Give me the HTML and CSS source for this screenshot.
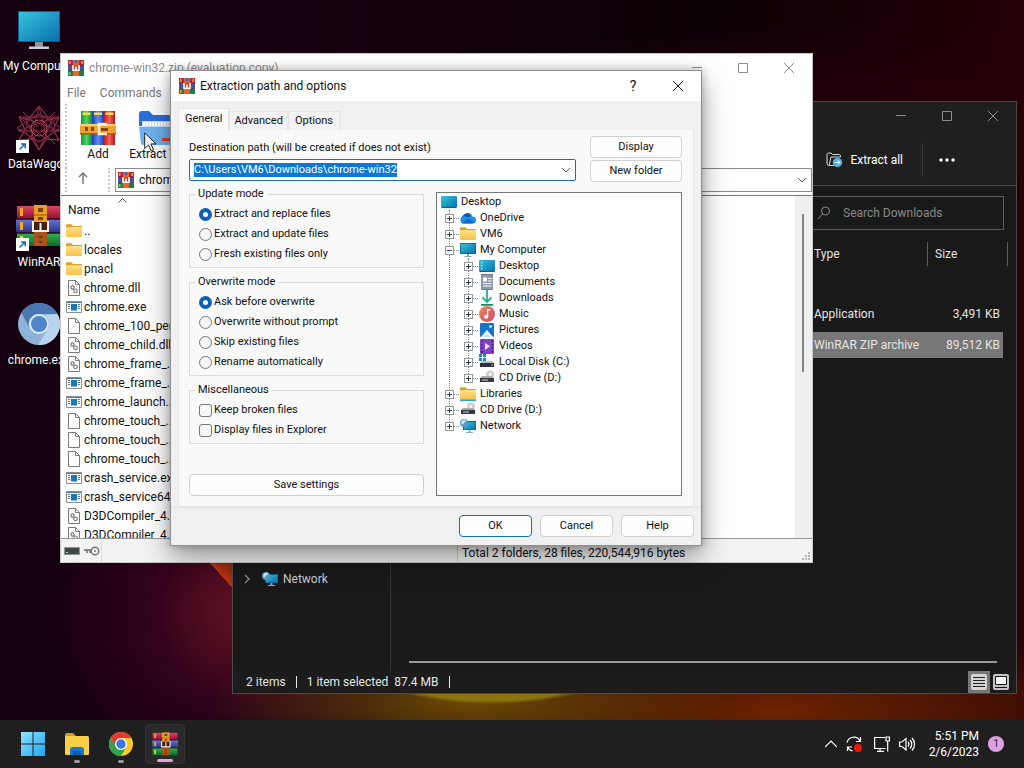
FILE: index.html
```html
<!DOCTYPE html>
<html lang="en">
<head>
  <meta charset="UTF-8" />
  <meta name="viewport" content="width=device-width, initial-scale=1" />
  <title>Extraction path and options</title>
  <link rel="stylesheet" href="styles.css">
</head>
<body>
  <!-- shared icons -->
  <svg class="sprite" width="0" height="0" aria-hidden="true">
    <defs>
      <linearGradient id="gScreen" x1="0" y1="0" x2="1" y2="1">
        <stop offset="0" stop-color="#36c4dc" /><stop offset="1" stop-color="#0b6fae" />
      </linearGradient>
      <linearGradient id="gFolder" x1="0" y1="0" x2="0" y2="1">
        <stop offset="0" stop-color="#ffe08a" /><stop offset="1" stop-color="#f7c244" />
      </linearGradient>
      <linearGradient id="gRed" x1="0" y1="0" x2="0" y2="1">
        <stop offset="0" stop-color="#e0466a" /><stop offset="1" stop-color="#8c0f2c" />
      </linearGradient>
      <linearGradient id="gBlue" x1="0" y1="0" x2="0" y2="1">
        <stop offset="0" stop-color="#6a76d8" /><stop offset="1" stop-color="#27307e" />
      </linearGradient>
      <linearGradient id="gGreen" x1="0" y1="0" x2="0" y2="1">
        <stop offset="0" stop-color="#35b050" /><stop offset="1" stop-color="#0c6a2a" />
      </linearGradient>
      <linearGradient id="gBookG"><stop offset="0" stop-color="#129a3a" /><stop offset=".5" stop-color="#4fd06a" /><stop offset="1" stop-color="#0f8a34" /></linearGradient>
      <linearGradient id="gBookB"><stop offset="0" stop-color="#1c3fb8" /><stop offset=".5" stop-color="#5f8cf5" /><stop offset="1" stop-color="#1c3fb8" /></linearGradient>
      <linearGradient id="gBookR"><stop offset="0" stop-color="#c21a20" /><stop offset=".5" stop-color="#f5605a" /><stop offset="1" stop-color="#b0141c" /></linearGradient>
      <linearGradient id="gMusic" x1="0" y1="0" x2="1" y2="1"><stop offset="0" stop-color="#ee8a5c" /><stop offset="1" stop-color="#c9486a" /></linearGradient>
      <linearGradient id="gWin" x1="0" y1="0" x2="1" y2="1"><stop offset="0" stop-color="#8fe4ff" /><stop offset="1" stop-color="#1fa4f0" /></linearGradient>
    </defs>

    <symbol id="i-rar" viewBox="0 0 16 16">
      <path fill="#b8283c" d="M0 0h16v5H0z" /><path fill="#4456a8" d="M0 5h16v5.500H0z" /><path fill="#1c8048" d="M0 10.500h16V16H0z" />
      <path fill="#4a2a4a" d="M0 4.800h16v.8H0zM0 10.200h16v.8H0z" />
      <path fill="#e8642c" d="M5 0h6v16H5z" /><path fill="#3c6ab8" d="M6.500 0h3v3h-3z" />
      <path fill="#b84a20" d="M4 5h8v6H4z" />
      <path fill="none" stroke="#fff" stroke-width="1.500" d="M5 5v5.200h6V5M8 6.500v3" />
      <path fill="#e8a040" d="M1 1h1.500v3H1zM13.500 1H15v3h-1.500zM1 12h1.500v3H1z" />
    </symbol>

    <symbol id="i-rarbig" viewBox="0 0 46 42">
      <path fill="url(#gRed)" d="M1 1h44v13H1z" /><path fill="url(#gBlue)" d="M0 14h46v14H0z" /><path fill="url(#gGreen)" d="M1 28h44v13H1z" />
      <path fill="#2a0a18" d="M0 13h46v2H0zM0 27h46v2H0z" opacity=".75" />
      <path fill="#f5a623" d="M4 3h3v8H4zM4 17h3v8H4z" /><path fill="#e8d23a" d="M4 31h3v8H4z" />
      <path fill="#a8541c" d="M18 26h13v15H18z" /><path fill="#e9a02a" d="M18 0h13v20H18z" /><path fill="#c77516" d="M18 9h13v2H18z" />
      <path fill="#7a4410" d="M22 3h5v4h-5zM22 12h5v3h-5z" />
      <path fill="#4b1d10" d="M17 17h15v10H17z" />
      <path fill="none" stroke="#f4f1ee" stroke-width="2" d="M17 16v10h15V16M24.500 18v8" />
      <path fill="#6e3410" d="M23 31h3v2h-3zM23 36h3v2h-3z" />
    </symbol>

    <symbol id="i-screen" viewBox="0 0 42 40">
      <path fill="#8a949c" d="M17 32h8v5h-8z" /><path fill="#c9cfd4" d="M11 36.500h20V39H11z" />
      <path fill="#0a5f94" d="M0 1h42v31H0z" /><path fill="url(#gScreen)" d="M1 2h40v29H1z" />
    </symbol>

    <symbol id="i-pc" viewBox="0 0 16 16">
      <path fill="#0b5c8e" d="M0 1h16v11H0z" /><path fill="url(#gScreen)" d="M.7 1.700h14.600v9.600H.7z" />
      <path fill="#8fa9b8" d="M7 12h2v2H7zM4.500 14h7v1h-7z" />
    </symbol>
    <symbol id="i-top" viewBox="0 0 16 16">
      <rect y="2" width="16" height="12" rx="1" fill="url(#gScreen)" /><path fill="#0a5f94" d="M1 13h14v1H1z" />
    </symbol>
    <symbol id="i-desk" viewBox="0 0 16 16">
      <use href="#i-top" /><path fill="#d9fbff" d="M2 4h1.300v1.300H2zM2 7h1.300v1.300H2zM2 10h1.300v1.300H2z" />
    </symbol>
    <symbol id="i-cloud" viewBox="0 0 16 16">
      <path fill="#0a5cb4" d="M4 12a4 4 0 0 1-.6-7A5 5 0 0 1 12 6l-6 6z" />
      <path fill="#1e90e8" d="M4 13.500a3.600 3.600 0 0 1 0-7.200c1.600 0 2.400.7 3.200 1.300l5-1.100A3.500 3.500 0 0 1 12.800 13.500z" />
      <path fill="#1268c8" d="M2 12.500l6-4 6 4c-.5.700-1 1-1.800 1H4c-1 0-1.600-.4-2-1z" />
    </symbol>
    <symbol id="i-folder" viewBox="0 0 16 16">
      <path fill="#dfa022" d="M0 2.500c0-.8.400-1.200 1-1.200h4.500L7 3h8c.6 0 1 .4 1 1v2H0z" />
      <rect y="4" width="16" height="10" rx="1" fill="url(#gFolder)" />
    </symbol>
    <symbol id="i-lib" viewBox="0 0 16 16">
      <use href="#i-folder" /><path fill="#2aa0cc" d="M0 13.500h16V15H0z" />
    </symbol>
    <symbol id="i-docs" viewBox="0 0 16 16">
      <path fill="#8b9aaa" d="M2 0h12v16H2z" /><path fill="#6d7d8e" d="M2 0h12v1H2zM2 15h12v1H2z" />
      <path fill="#fff" d="M4 3.500h4v4H4zM9 4h3.500v1H9zM9 6.500h3.500v1H9zM4 9h8.500v1H4zM4 11.500h8.500v1H4z" />
    </symbol>
    <symbol id="i-down" viewBox="0 0 16 16">
      <path fill="none" stroke="#1fae8a" stroke-width="1.800" d="M8 0v12M3.500 7.500L8 12l4.500-4.500" /><path fill="#129070" d="M2 14h12v1.800H2z" />
    </symbol>
    <symbol id="i-music" viewBox="0 0 16 16">
      <circle cx="8" cy="8" r="8" fill="url(#gMusic)" />
      <path fill="#fff" d="M8 3h3.500v1.500H9.200v6.300A2 2 0 1 1 8 9z" />
    </symbol>
    <symbol id="i-pics" viewBox="0 0 16 16">
      <rect x="1" y="1" width="14" height="14" rx="1" fill="#1277c8" /><path fill="#fff" d="M2 15l5.800-7L14 15z" /><path fill="#b6e0ff" d="M5 15l3-3.500L11 15z" /><circle cx="11.500" cy="4.500" r="1.300" fill="#fff" />
    </symbol>
    <symbol id="i-video" viewBox="0 0 16 16">
      <rect x="1" y="1" width="14" height="15" rx="1" fill="#8040c8" />
      <path fill="#3d1480" d="M2 2.500h1.500V4H2zM2 6h1.500v1.500H2zM2 9.500h1.500V11H2zM2 13h1.500v1.500H2zM12.500 2.500H14V4h-1.500zM12.500 6H14v1.500h-1.500zM12.500 9.500H14V11h-1.500zM12.500 13H14v1.500h-1.500z" />
      <path fill="#f6dcff" d="M6 5l5 3.300L6 12z" />
    </symbol>
    <symbol id="i-disk" viewBox="0 0 16 16">
      <path fill="#1a84d8" d="M0 0h3v3H0zM4 0h3v3H4zM0 4h3v3H0zM4 4h3v3H4z" />
      <path fill="#b9bcc0" d="M3 7h10l2 2H1z" /><path fill="#2f3236" d="M1 9h14v4H1z" /><path fill="#9be070" d="M12 10.500h2v1h-2z" />
    </symbol>
    <symbol id="i-cd" viewBox="0 0 16 16">
      <circle cx="11" cy="4.500" r="4" fill="#ccd0d4" /><circle cx="11" cy="4.500" r="1.200" fill="#fff" />
      <path fill="#a8acb0" d="M3 6h10l2 2H1z" /><path fill="#34373b" d="M1 8h14v4H1z" /><path fill="#d0d4d8" d="M3 9.500h6v1H3z" />
    </symbol>
    <symbol id="i-net" viewBox="0 0 16 16">
      <path fill="#0b5c8e" d="M3 3h13v9H3z" /><path fill="url(#gScreen)" d="M4 4h11.500v7.500H4z" />
      <path fill="#8fa9b8" d="M8.500 12h2v2h-2zM6 14h7v1H6z" />
      <circle cx="4" cy="5" r="4" fill="#5a9cc4" /><path fill="#c8ecf8" d="M2 2.500l3-1 1 2-2 1-1 2-2-1z" />
    </symbol>
    <symbol id="i-file" viewBox="0 0 16 16">
      <path fill="#fff" stroke="#7a7a7a" d="M2.500.5h7l4 4v11h-11z" /><path fill="none" stroke="#7a7a7a" d="M9.500.5v4h4" />
    </symbol>
    <symbol id="i-dll" viewBox="0 0 16 16">
      <use href="#i-file" />
      <circle cx="6.500" cy="7.500" r="1.600" fill="none" stroke="#777" stroke-width="1.200" /><circle cx="9.500" cy="10.800" r="1.800" fill="none" stroke="#777" stroke-width="1.200" />
    </symbol>
    <symbol id="i-exe" viewBox="0 0 16 16">
      <path fill="#fff" stroke="#8a8f96" d="M.5 2.500h15v11H.5z" /><path fill="#1878b8" d="M5 5h6v6.500H5z" />
      <path fill="#5a7898" d="M2 5h2v1H2zM2 7h2v1H2zM2 9h2v1H2zM12 5h2v1h-2zM12 7h2v1h-2zM12 9h2v1h-2zM1 3h14v1H1z" />
    </symbol>
    <symbol id="i-min" viewBox="0 0 10 10"><path stroke="currentColor" d="M0 4.500h10" /></symbol>
    <symbol id="i-max" viewBox="0 0 10 10"><path fill="none" stroke="currentColor" d="M.5.5h9v9h-9z" /></symbol>
    <symbol id="i-close" viewBox="0 0 10 10"><path stroke="currentColor" d="M0 0l10 10M10 0L0 10" /></symbol>
    <symbol id="i-caret" viewBox="0 0 10 10"><path fill="none" stroke="#555" d="M1 3l4 4 4-4" /></symbol>
    <symbol id="i-link" viewBox="0 0 13 13">
      <path fill="#fff" d="M0 0h13v13H0z" /><path fill="none" stroke="#1667c0" stroke-width="1.500" d="M3.500 9.500l5-5M5 4h4.200v4.200" />
    </symbol>
  </svg>

  <main class="desktop">
    <nav class="shortcuts" aria-label="Desktop">
      <a class="shortcut" href="#"><span class="pic"><svg width="42" height="40"><use href="#i-screen" /></svg></span>My Computer</a>
      <a class="shortcut" href="#">
        <span class="pic">
          <svg width="46" height="46" viewBox="-23 -23 46 46" fill="none" stroke="#b0405a">
            <path d="M0-22L11-8 20-11 14 2 20 12 7 11 0 22-7 11-20 12-14 2-20-11-11-8z" />
            <path d="M0-22L8 12-20-11H20L-8 12zM0 22L14-10-21 3H21L-14-10z" stroke="#8c2c46" />
            <path d="M-16-16L16 16M16-16L-16 16M-22 0L0-14 22 0 0 14z" stroke="#9c3450" />
            <circle r="8" stroke="#c04a62" /><circle r="13" stroke="#6e2038" /><circle r="3" fill="#1a0208" stroke="#5a1428" />
          </svg>
          <svg class="overlay" width="13" height="13"><use href="#i-link" /></svg>
        </span>DataWagon
      </a>
      <a class="shortcut" href="#">
        <span class="pic"><svg width="46" height="42"><use href="#i-rarbig" /></svg><svg class="overlay" width="13" height="13"><use href="#i-link" /></svg></span>WinRAR
      </a>
      <a class="shortcut" href="#">
        <span class="pic">
          <svg width="42" height="42" viewBox="-21 -21 42 42">
            <circle r="21" fill="#8fb4da" />
            <path fill="#4a78b0" d="M-17.600-11.500A21 21 0 0 1 18.500-10H0A10 10 0 0 0-9 5z" />
            <path fill="#b8d4ee" d="M18.500-10A21 21 0 0 1-1 21L8.700 5A10 10 0 0 0 5-9z" />
            <circle r="10" fill="#dcebf8" /><circle r="8" fill="#4f86c8" />
          </svg>
        </span>chrome.exe
      </a>
    </nav>

    <!-- file explorer -->
    <section class="window explorer" aria-label="Downloads">
      <div class="controls">
        <button aria-label="Minimize"><svg width="10" height="10"><use href="#i-min" /></svg></button>
        <button aria-label="Maximize"><svg width="10" height="10"><use href="#i-max" /></svg></button>
        <button aria-label="Close"><svg width="10" height="10"><use href="#i-close" /></svg></button>
      </div>
      <div class="commands">
        <button class="extract-all">
          <svg width="17" height="16" viewBox="0 0 17 16"><path fill="none" stroke="#d8d8d8" d="M2.500 13.500L1 12V2.500C1 1.500 1.500 1 2.500 1H5l1.500 1.500H13c1 0 1.500.5 1.500 1.500v1H5L3 13.500h5" /><circle cx="11.500" cy="10.500" r="4.700" fill="#4db4e4" /><path fill="none" stroke="#fff" d="M9 10.500h5M12 8.500l2 2-2 2" /></svg>
          Extract all
        </button>
        <button class="more" aria-label="See more"><svg width="16" height="4" viewBox="0 0 16 4" fill="#fff"><circle cx="2" cy="2" r="1.700" /><circle cx="8" cy="2" r="1.700" /><circle cx="14" cy="2" r="1.700" /></svg></button>
      </div>
      <div class="address">
        <label class="search">
          <svg width="14" height="14" viewBox="0 0 14 14" fill="none" stroke="#8c8c8c"><circle cx="8.500" cy="5" r="4" /><path d="M5.500 8L1 13" /></svg>
          <input type="search" placeholder="Search Downloads" aria-label="Search Downloads" />
        </label>
      </div>
      <div class="browse">
        <div class="places">
          <a class="place" href="#">
            <svg width="10" height="10" viewBox="0 0 10 10"><path fill="none" stroke="#8a8a8a" stroke-width="1.300" d="M3 1l4 4-4 4" /></svg>
            <svg width="16" height="16"><use href="#i-net" /></svg>
            Network
          </a>
        </div>
        <div class="files">
          <table>
            <thead><tr><th>Type</th><th>Size</th></tr></thead>
            <tbody>
              <tr><td>Application</td><td>3,491 KB</td></tr>
              <tr class="selected"><td>WinRAR ZIP archive</td><td>89,512 KB</td></tr>
            </tbody>
          </table>
          <div class="hscroll"></div>
        </div>
      </div>
      <div class="explorer-status">
        <span>2 items</span><span>1 item selected&nbsp; 87.4 MB</span>
        <button class="view active" aria-label="Details"><svg width="16" height="16" viewBox="0 0 16 16"><rect width="16" height="16" rx="2" fill="#d4d4d4" /><path stroke="#222" d="M2 3.500h12M2 6.500h12M2 9.500h12M2 12.500h12" /></svg></button>
        <button class="view" aria-label="Large icons"><svg width="16" height="16" viewBox="0 0 16 16"><rect width="16" height="16" rx="2" fill="#c4c4c4" /><path fill="#f4f4f4" stroke="#111" d="M2.500 2.500h11v8h-11z" /><path stroke="#111" d="M2 13.500h12" /></svg></button>
      </div>
    </section>

    <!-- archive window -->
    <section class="window archive" aria-label="chrome-win32.zip">
      <div class="titlebar">
        <svg width="16" height="16"><use href="#i-rar" /></svg>
        <span>chrome-win32.zip (evaluation copy)</span>
        <div class="controls">
          <button aria-label="Minimize"><svg width="10" height="10"><use href="#i-min" /></svg></button>
          <button aria-label="Maximize"><svg width="10" height="10"><use href="#i-max" /></svg></button>
          <button aria-label="Close"><svg width="10" height="10"><use href="#i-close" /></svg></button>
        </div>
      </div>
      <div class="menubar"><button>File</button><button>Commands</button></div>
      <div class="toolbar">
        <button>
          <svg width="36" height="36" viewBox="0 0 36 36">
            <path fill="url(#gBookG)" d="M1 1h11v34H1z" /><path fill="url(#gBookB)" d="M12 1h12v34H12z" /><path fill="url(#gBookR)" d="M24 1h11v34H24z" />
            <path fill="#f6e04a" d="M2.500 2.500h8V5h-8zM14 2.500h8V5h-8zM25.500 2.500h8V5h-8z" />
            <path fill="#f0a030" d="M0 14h36v10H0z" /><path fill="#ffd078" d="M0 14h36v2H0z" /><path fill="#a85c14" d="M0 23h36v1.500H0z" />
            <path fill="none" stroke="#fff2d8" stroke-width="2.500" d="M27 14h-8v10h8" /><path fill="#8a4410" d="M21 18h7v3h-7zM5 17h3v4H5zM11 17h3v4h-3z" />
          </svg>
          Add
        </button>
        <button>
          <svg width="36" height="36" viewBox="0 0 36 36">
            <path fill="#2d6fd8" d="M1 4q0-3 3-3h7l4 4h16q3 0 3 3v8H1z" /><path fill="#cfe4fa" d="M4 11h28v8H4z" />
            <path fill="#6fb2f0" d="M1 17h34l-2 16q0 2-2 2H5q-2 0-2-2z" /><path stroke="#fff" stroke-width="4" stroke-dasharray="2 1" d="M5 14h27" />
            <path fill="#e0402c" d="M24 28h10v3H24z" />
          </svg>
          Extract To
        </button>
        <svg class="cursor" width="13" height="20" viewBox="0 0 13 20"><path fill="#fff" stroke="#222" d="M.7 1v15.500l3.800-3.600 2.600 6 2.400-1-2.600-6h5.200z" /></svg>
      </div>
      <div class="pathbar">
        <button aria-label="Up one level"><svg width="12" height="12" viewBox="0 0 12 12"><path fill="none" stroke="#777" stroke-width="1.500" d="M6 12V1M2 5l4-4 4 4" /></svg></button>
        <div class="path-combo">
          <svg width="16" height="16"><use href="#i-rar" /></svg>
          <input type="text" value="chrome-win32.zip" aria-label="Archive path" />
          <svg width="10" height="10"><use href="#i-caret" /></svg>
        </div>
      </div>
      <div class="listing">
        <svg class="sort" width="9" height="5" viewBox="0 0 9 5"><path fill="none" stroke="#555" d="M.5 4.500l4-4 4 4" /></svg>
        <div class="column-name">Name</div>
        <ul>
          <li><svg><use href="#i-folder" /></svg>..</li>
          <li><svg><use href="#i-folder" /></svg>locales</li>
          <li><svg><use href="#i-folder" /></svg>pnacl</li>
          <li><svg><use href="#i-dll" /></svg>chrome.dll</li>
          <li><svg><use href="#i-exe" /></svg>chrome.exe</li>
          <li><svg><use href="#i-file" /></svg>chrome_100_per...</li>
          <li><svg><use href="#i-dll" /></svg>chrome_child.dll</li>
          <li><svg><use href="#i-dll" /></svg>chrome_frame_...</li>
          <li><svg><use href="#i-exe" /></svg>chrome_frame_...</li>
          <li><svg><use href="#i-exe" /></svg>chrome_launch...</li>
          <li><svg><use href="#i-file" /></svg>chrome_touch_...</li>
          <li><svg><use href="#i-file" /></svg>chrome_touch_...</li>
          <li><svg><use href="#i-file" /></svg>chrome_touch_...</li>
          <li><svg><use href="#i-exe" /></svg>crash_service.exe</li>
          <li><svg><use href="#i-exe" /></svg>crash_service64...</li>
          <li><svg><use href="#i-dll" /></svg>D3DCompiler_4...</li>
          <li><svg><use href="#i-dll" /></svg>D3DCompiler_4...</li>
        </ul>
        <div class="vscroll"></div>
      </div>
      <div class="archive-status">
        <div class="lock">
          <svg width="16" height="8" viewBox="0 0 16 8"><path fill="#3c4a48" stroke="#8a9492" d="M.5.500h15v7H.5z" /><path fill="#a8dca0" d="M2 5h2v1H2z" /></svg>
          <svg width="17" height="10" viewBox="0 0 17 10"><path fill="none" stroke="#888" stroke-width="2" d="M8 4H1M4 4v3M7 4v3" /><circle cx="12" cy="5" r="3.800" fill="#eee" stroke="#777" stroke-width="1.500" /><circle cx="12" cy="5" r="1" fill="#777" /></svg>
        </div>
        <div class="total">Total 2 folders, 28 files, 220,544,916 bytes</div>
        <svg class="grip" width="9" height="9" viewBox="0 0 9 9" fill="#b4b4b4"><path d="M6 0h2v2H6zM3 3h2v2H3zM6 3h2v2H6zM0 6h2v2H0zM3 6h2v2H3zM6 6h2v2H6z" /></svg>
      </div>
    </section>

    <!-- extraction dialog -->
    <section class="window extraction" role="dialog" aria-labelledby="dialogTitle">
      <div class="titlebar">
        <svg width="16" height="16"><use href="#i-rar" /></svg>
        <span id="dialogTitle">Extraction path and options</span>
        <div class="controls">
          <button class="what" aria-label="Help">?</button>
          <button aria-label="Close"><svg width="10" height="10"><use href="#i-close" /></svg></button>
        </div>
      </div>
      <div class="tabs" role="tablist">
        <button role="tab" class="active" aria-selected="true">General</button>
        <button role="tab">Advanced</button>
        <button role="tab">Options</button>
      </div>
      <form class="panel" onsubmit="return false">
        <div class="destination">
          <label for="dest">Destination path (will be created if does not exist)</label>
          <div class="combo">
            <input type="text" id="dest" value="C:\Users\VM6\Downloads\chrome-win32" spellcheck="false" />
            <svg width="10" height="10"><use href="#i-caret" /></svg>
          </div>
        </div>
        <div class="path-buttons">
          <button type="button">Display</button>
          <button type="button">New folder</button>
        </div>
        <div class="options">
          <fieldset>
            <legend>Update mode</legend>
            <label><input type="radio" name="update" checked />Extract and replace files</label>
            <label><input type="radio" name="update" />Extract and update files</label>
            <label><input type="radio" name="update" />Fresh existing files only</label>
          </fieldset>
          <fieldset>
            <legend>Overwrite mode</legend>
            <label><input type="radio" name="overwrite" checked />Ask before overwrite</label>
            <label><input type="radio" name="overwrite" />Overwrite without prompt</label>
            <label><input type="radio" name="overwrite" />Skip existing files</label>
            <label><input type="radio" name="overwrite" />Rename automatically</label>
          </fieldset>
          <fieldset>
            <legend>Miscellaneous</legend>
            <label><input type="checkbox" />Keep broken files</label>
            <label><input type="checkbox" />Display files in Explorer</label>
          </fieldset>
          <button type="button" class="save">Save settings</button>
        </div>
        <div class="tree">
          <div class="node"><svg><use href="#i-top" /></svg>Desktop</div>
          <ul>
            <li><div class="node"><i class="toggle plus"></i><svg><use href="#i-cloud" /></svg>OneDrive</div></li>
            <li><div class="node"><i class="toggle plus"></i><svg><use href="#i-folder" /></svg>VM6</div></li>
            <li>
              <div class="node"><i class="toggle"></i><svg><use href="#i-pc" /></svg>My Computer</div>
              <ul>
                <li><div class="node"><i class="toggle plus"></i><svg><use href="#i-desk" /></svg>Desktop</div></li>
                <li><div class="node"><i class="toggle plus"></i><svg><use href="#i-docs" /></svg>Documents</div></li>
                <li><div class="node"><i class="toggle plus"></i><svg><use href="#i-down" /></svg>Downloads</div></li>
                <li><div class="node"><i class="toggle plus"></i><svg><use href="#i-music" /></svg>Music</div></li>
                <li><div class="node"><i class="toggle plus"></i><svg><use href="#i-pics" /></svg>Pictures</div></li>
                <li><div class="node"><i class="toggle plus"></i><svg><use href="#i-video" /></svg>Videos</div></li>
                <li><div class="node"><i class="toggle plus"></i><svg><use href="#i-disk" /></svg>Local Disk (C:)</div></li>
                <li><div class="node"><i class="toggle plus"></i><svg><use href="#i-cd" /></svg>CD Drive (D:)</div></li>
              </ul>
            </li>
            <li><div class="node"><i class="toggle plus"></i><svg><use href="#i-lib" /></svg>Libraries</div></li>
            <li><div class="node"><i class="toggle plus"></i><svg><use href="#i-cd" /></svg>CD Drive (D:)</div></li>
            <li><div class="node"><i class="toggle plus"></i><svg><use href="#i-net" /></svg>Network</div></li>
          </ul>
        </div>
      </form>
      <div class="dialog-buttons">
        <button class="default">OK</button>
        <button>Cancel</button>
        <button>Help</button>
      </div>
    </section>
  </main>

  <footer class="taskbar">
    <button class="app" aria-label="Start">
      <svg width="24" height="24" viewBox="0 0 24 24" fill="url(#gWin)"><path d="M0 0h11.500v11.500H0zM12.500 0H24v11.500H12.500zM0 12.500h11.500V24H0zM12.500 12.500H24V24H12.500z" /></svg>
    </button>
    <button class="app running" aria-label="File Explorer">
      <svg width="24" height="24" viewBox="0 0 24 24"><path fill="#d99a1c" d="M0 3q0-2 2-2h6l3 3v3H0z" /><rect y="4" width="24" height="19" rx="1.500" fill="#f9cf45" /><path fill="#1977d2" d="M5 23v-5q0-3 3-3h8q3 0 3 3v5z" /><path fill="#0f5cae" d="M8 19h8v4H8z" /></svg>
    </button>
    <button class="app running" aria-label="Chrome">
      <svg width="24" height="24" viewBox="-12 -12 24 24"><circle r="12" fill="#ffca28" /><path fill="#e53a30" d="M-10.400-6A12 12 0 0 1 10.400-6H0L-5.200 3z" /><path fill="#2fa24c" d="M-10.400-6A12 12 0 0 0 0 12L5.200 3-5.200 3z" /><circle r="6" fill="#fff" /><circle r="4.700" fill="#3a78e8" /></svg>
    </button>
    <button class="app running current" aria-label="WinRAR">
      <svg width="26" height="24" viewBox="0 0 46 42"><use href="#i-rarbig" /></svg>
    </button>

    <div class="tray">
      <svg width="12" height="8" viewBox="0 0 12 8"><path fill="none" stroke="#fff" stroke-width="1.200" d="M0 7l6-6 6 6" /></svg>
      <svg width="16" height="16" viewBox="0 0 16 16"><path fill="none" stroke="#fff" stroke-width="1.200" d="M1 6.500a7 7 0 0 1 13-1.500M14.500 1v4.500H10M1.500 15v-4H6M1.500 11a7 7 0 0 0 5 4" /><circle cx="12" cy="12" r="4" fill="#f01808" /></svg>
      <svg width="16" height="16" viewBox="0 0 16 16"><path fill="none" stroke="#fff" stroke-width="1.200" d="M11 1.500H.6v11h11M12 1h3.400v4H12zM13.700 5v10.500M6 12.500v3M3 15.400h7" /></svg>
      <svg width="17" height="14" viewBox="0 0 17 14"><path fill="none" stroke="#fff" stroke-width="1.200" d="M.6 5v4.500H3L7 13V1.500L3 5zM9 5a3.500 3.500 0 0 1 0 4.500M11 3a6 6 0 0 1 0 8.500M13 1a9 9 0 0 1 0 12.500" /></svg>
      <div class="clock"><time>5:51 PM</time><time>2/6/2023</time></div>
      <span class="badge">1</span>
    </div>
  </footer>

  <script>
    const dest = document.getElementById('dest');
    dest.focus();
    dest.select();
  </script>
</body>
</html>
```
FILE: styles.css
```css
* {
    margin: 0;
    padding: 0;
    box-sizing: border-box;
}

body {
    display: flex;
    flex-direction: column;
    height: 100vh;
    overflow: hidden;
    font-family: Roboto, 'Segoe UI', sans-serif;
    font-size: 12px;
    line-height: 16px;
    color: #111;
    background:
        radial-gradient(ellipse 120px 34px at 48% 670px, #8a7410, #8a7410 90%, transparent),
        linear-gradient(48deg, transparent 50%, #b83410 50%, #6e1414 100%) 202px 553px / 34px 40px no-repeat,
        radial-gradient(ellipse 260px 70px at 46% 700px, #6e4a06, transparent),
        radial-gradient(ellipse 420px 90px at 76% 710px, #6e2400, transparent),
        radial-gradient(ellipse 80px 90px at 240px 610px, #5c1220, transparent),
        radial-gradient(ellipse 190px 180px at 240px 610px, #4a0524, transparent),
        radial-gradient(ellipse 500px 90px at 900px 110px, #26000a, transparent),
        linear-gradient(90deg, #16000f, #16000f 30%, #0b0006 70%, #240006);
}

button {
    font: inherit;
    color: inherit;
    border: none;
    background: none;
}

input {
    font: inherit;
    color: inherit;
}

a {
    color: inherit;
    text-decoration: none;
}

ul {
    list-style: none;
}

svg {
    flex: none;
}

.sprite {
    position: absolute;
}

/* desktop */

.desktop {
    position: relative;
    flex: 1;
    min-height: 0;
}

.shortcuts {
    display: flex;
    flex-direction: column;
    width: 78px;
    padding-top: 5px;
}

.shortcut {
    display: flex;
    flex-direction: column;
    align-items: center;
    height: 98px;
    color: #fff;
    text-shadow: 0 1px 2px #000;
    white-space: nowrap;
}

.pic {
    position: relative;
    display: flex;
    align-items: center;
    justify-content: center;
    width: 46px;
    height: 50px;
    margin-bottom: 3px;
}

.overlay {
    position: absolute;
    left: 0;
    bottom: 0;
}

.window {
    position: absolute;
    display: flex;
    flex-direction: column;
}

.controls {
    display: flex;
    margin-left: auto;
}

.controls button {
    display: flex;
    align-items: center;
    justify-content: center;
    width: 46px;
    height: 28px;
}

.titlebar {
    display: flex;
    align-items: center;
    gap: 5px;
    padding-left: 8px;
    background: #fff;
}

/* file explorer */

.explorer {
    inset: 101px 7px 26px 232px;
    color: #e4e4e4;
    background: #191919;
    border: 1px solid #4a4a4a;
}

.explorer > .controls {
    width: 100%;
    justify-content: flex-end;
    color: #8c8c8c;
    background: #1f1f1f;
}

.commands {
    display: flex;
    align-items: center;
    justify-content: flex-end;
    height: 56px;
    padding: 4px 45px 0 0;
    background: #1f1f1f;
    border-bottom: 1px solid #4a4a4a;
}

.extract-all {
    display: flex;
    align-items: center;
    gap: 7px;
    height: 34px;
    padding-right: 19px;
    border-right: 1px solid #3c3c3c;
    color: #fff;
}

.more {
    display: flex;
    align-items: center;
    justify-content: center;
    width: 48px;
    height: 34px;
}

.address {
    display: flex;
    justify-content: flex-end;
    padding: 10px 12px 12px;
}

.search {
    display: flex;
    align-items: center;
    gap: 12px;
    width: 200px;
    height: 34px;
    padding-left: 12px;
    border: 1px solid #5c5c5c;
}

.search input {
    width: 100%;
    border: none;
    outline: none;
    background: none;
}

.search input::placeholder {
    color: #888;
}

.browse {
    display: flex;
    flex: 1;
    min-height: 0;
}

.places {
    display: flex;
    flex-direction: column;
    justify-content: flex-end;
    width: 158px;
    padding: 0 9px 82px;
    border-right: 1px solid #333;
}

.place {
    display: flex;
    align-items: center;
    height: 20px;
    color: #ccc;
}

.place svg + svg {
    margin: 0 5px 0 10px;
}

.files {
    display: flex;
    flex: 1;
    flex-direction: column;
    padding: 0 8px 8px 18px;
}

.files table {
    width: 202px;
    margin-left: auto;
    border-spacing: 0;
}

.files th {
    height: 24px;
    font-weight: normal;
    text-align: left;
    padding-left: 7px;
    border-right: 1px solid #5c5c5c;
}

.files th:first-child {
    width: 122px;
    padding-left: 8px;
}

.files thead::after {
    content: '';
    display: block;
    height: 35px;
}

.files td {
    height: 26px;
    padding-left: 8px;
}

.files tr:first-child td {
    height: 31px;
    padding-bottom: 5px;
}

.files td:last-child {
    padding: 0 3px 0 0;
    text-align: right;
    border-right: 5px solid transparent;
    background-clip: padding-box;
}

.files tr:first-child td:last-child {
    padding-bottom: 5px;
}

.files .selected td {
    background-color: #777;
}

.hscroll {
    height: 2px;
    margin: auto 11px 0 0;
    background: #9a9a9a;
}

.explorer-status {
    display: flex;
    align-items: center;
    height: 22px;
    padding: 0 4px 0 13px;
    background: #1c1c1c;
}

.explorer-status span {
    padding-right: 10px;
    margin-right: 10px;
    line-height: 12px;
    border-right: 1px solid #e4e4e4;
}

.view {
    display: flex;
    align-items: center;
    justify-content: center;
    width: 22px;
    height: 22px;
}

.view.active {
    margin-left: auto;
    background: #777;
}

/* archive window */

.archive {
    inset: 53px 211px 157px 60px;
    background: #fff;
    border: 1px solid #c8c8c8;
}

.archive > .titlebar {
    color: #8c8c8c;
    padding-left: 7px;
}

.menubar {
    display: flex;
    gap: 14px;
    padding: 3px 6px;
    color: #777;
}

.toolbar {
    position: relative;
    display: flex;
    gap: 4px;
    height: 64px;
    margin-left: 4px;
    padding-left: 4px;
    border-left: 2px dotted #ccc;
}

.toolbar button {
    display: flex;
    flex-direction: column;
    align-items: center;
    width: 54px;
    padding-top: 6px;
    white-space: nowrap;
}

.cursor {
    position: absolute;
    left: 77px;
    top: 28px;
}

.pathbar {
    display: flex;
    height: 24px;
    margin-left: 4px;
    border-left: 2px dotted #ccc;
}

.pathbar button {
    width: 43px;
    margin-right: 5px;
    padding-right: 10px;
    border-right: 2px dotted #ccc;
}

.path-combo {
    display: flex;
    flex: 1;
    align-items: center;
    gap: 5px;
    height: 24px;
    padding: 0 4px 0 2px;
    border: 1px solid #8a8a8a;
}

.path-combo input {
    flex: 1;
    min-width: 0;
    border: none;
    outline: none;
}

.listing {
    position: relative;
    flex: 1;
    min-height: 0;
    margin-top: 3px;
    overflow: hidden;
    border-top: 1px solid #777;
    border-bottom: 1px solid #999;
}

.sort {
    position: absolute;
    left: 57px;
    top: 2px;
}

.column-name {
    padding: 6px 7px 3px;
}

.listing li {
    display: flex;
    align-items: center;
    gap: 2px;
    height: 19px;
    padding-left: 5px;
    white-space: nowrap;
}

.listing li svg {
    width: 16px;
    height: 16px;
}

.vscroll {
    position: absolute;
    top: 0;
    right: 0;
    bottom: 0;
    width: 17px;
    background: #efefef;
}

.vscroll::after {
    content: '';
    position: absolute;
    top: 18px;
    left: 7px;
    width: 2px;
    height: 158px;
    background: #868686;
}

.archive-status {
    display: flex;
    height: 23px;
    background: #f3f3f3;
}

.lock {
    display: flex;
    align-items: center;
    gap: 3px;
    width: 41px;
    padding-left: 3px;
    border-right: 1px solid #ddd;
}

.total {
    width: 355px;
    margin-left: auto;
    padding: 6px 4px 0;
    border-left: 1px solid #ccc;
}

.grip {
    position: absolute;
    right: 1px;
    bottom: 1px;
}

/* extraction dialog */

.extraction {
    top: 70px;
    left: 170px;
    width: 532px;
    background: #f0f0f0;
    border: 1px solid #8f8f8f;
    box-shadow: 0 12px 26px rgba(0, 0, 0, 0.38), 0 0 8px rgba(0, 0, 0, 0.25);
    font-size: 11px;
    line-height: 14px;
}

.extraction > .titlebar {
    height: 30px;
    font-size: 12px;
}

.controls .what {
    width: 44px;
    font-size: 14px;
}

.tabs {
    display: flex;
    align-items: flex-end;
    padding: 7px 7px 0;
}

.tabs button {
    height: 19px;
    padding: 0 4px;
    background: #f3f3f3;
    border: 1px solid #e5e5e5;
    border-bottom: none;
}

.tabs button + button + button {
    padding: 0 6px;
}

.tabs .active {
    height: 22px;
    padding: 0 6px 2px;
    background: #f9f9f9;
}

.panel {
    display: grid;
    grid-template-columns: 235px 1fr 92px;
    column-gap: 12px;
    margin: 0 7px;
    padding: 6px 11px 10px 10px;
    background: #f9f9f9;
    border: 1px solid #e5e5e5;
    border-top: none;
}

.destination {
    grid-column: 1 / 3;
    padding: 5px 2px 0 0;
}

.destination label {
    display: block;
    margin-bottom: 4px;
}

.combo {
    display: flex;
    align-items: center;
    height: 22px;
    padding: 0 4px;
    background: #fff;
    border: 1px solid #1d6fb0;
    border-radius: 2px;
}

.combo input {
    flex: 1;
    min-width: 0;
    border: none;
    outline: none;
}

.combo input::selection {
    color: #fff;
    background: #0a78d4;
}

.path-buttons {
    display: flex;
    flex-direction: column;
    gap: 2px;
}

.path-buttons button,
.dialog-buttons button,
.save {
    height: 22px;
    background: #fefefe;
    border: 1px solid #d0d0d0;
    border-radius: 4px;
}

.options {
    display: flex;
    flex-direction: column;
    gap: 7px;
    padding-top: 5px;
}

fieldset {
    padding: 3px 9px;
    border: 1px solid #dcdcdc;
}

legend {
    margin-left: -4px;
    padding: 0 3px;
}

fieldset label {
    display: flex;
    align-items: center;
    gap: 2px;
    height: 20px;
}

fieldset input {
    appearance: none;
    width: 13px;
    height: 13px;
    background: #f6f6f6;
    border: 1px solid #777;
    border-radius: 3px;
}

fieldset input[type="radio"] {
    border-radius: 50%;
}

fieldset input[type="radio"]:checked {
    background: #fff;
    border: 4px solid #0c5fb4;
}

.save {
    margin-top: auto;
}

.tree {
    grid-column: 2 / 4;
    margin-top: 10px;
    padding: 1px 4px;
    min-height: 304px;
    background: #fff;
    border: 1px solid #777;
}

.node {
    display: flex;
    align-items: center;
    height: 16px;
}

.node svg {
    width: 16px;
    height: 16px;
    margin-right: 4px;
}

.tree ul {
    position: relative;
    margin-left: 4px;
}

.tree ul ul {
    margin-left: 19px;
}

.tree ul::before {
    content: '';
    position: absolute;
    top: 0;
    bottom: 8px;
    left: 4px;
    border-left: 1px dotted #888;
}

.toggle {
    position: relative;
    flex: none;
    width: 9px;
    height: 9px;
    margin-right: 6px;
    background: #fff linear-gradient(#345, #345) center / 5px 1px no-repeat;
    border: 1px solid #999;
}

.toggle.plus {
    background:
        linear-gradient(#345, #345) center / 5px 1px no-repeat,
        linear-gradient(#345, #345) center / 1px 5px no-repeat,
        #fff;
}

.toggle::after {
    content: '';
    position: absolute;
    top: 3px;
    left: 8px;
    width: 5px;
    border-top: 1px dotted #888;
}

.dialog-buttons {
    display: flex;
    justify-content: flex-end;
    gap: 8px;
    padding: 7px 7px 8px;
    border-top: 1px solid #e2e2e2;
}

.dialog-buttons button {
    width: 73px;
}

.dialog-buttons .default {
    border-color: #1a6fa8;
}

/* taskbar */

.taskbar {
    position: relative;
    display: flex;
    align-items: center;
    gap: 4px;
    height: 48px;
    padding: 0 28px 0 13px;
    color: #fff;
    background: #1f1f1f;
}

.app {
    position: relative;
    display: flex;
    align-items: center;
    justify-content: center;
    width: 40px;
    height: 40px;
    border-radius: 4px;
}

.running::after {
    content: '';
    position: absolute;
    bottom: 1px;
    width: 6px;
    height: 3px;
    border-radius: 2px;
    background: #9a9a9a;
}

.current {
    background: #2a2a2a;
    border: 1px solid #333;
}

.current::after {
    width: 16px;
    background: #dda6dc;
}

.tray {
    display: flex;
    align-items: center;
    gap: 9px;
    margin-left: auto;
}

.tray svg:nth-child(3) {
    margin-left: 3px;
}

.clock {
    display: flex;
    flex-direction: column;
    width: 54px;
    text-align: right;
}

.badge {
    width: 16px;
    margin-right: -8px;
    font-size: 11px;
    text-align: center;
    color: #333;
    background: #dda0e0;
    border-radius: 50%;
}
```
